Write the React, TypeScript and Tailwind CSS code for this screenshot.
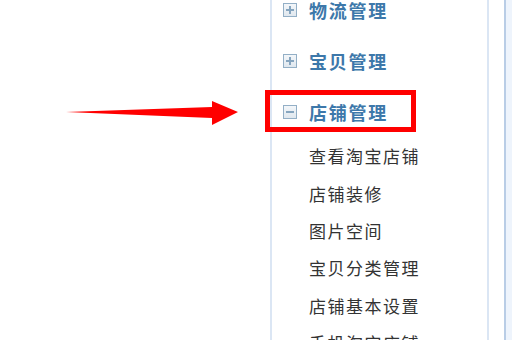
const groups = ["物流管理", "宝贝管理"];

const shopItems = [
  "查看淘宝店铺",
  "店铺装修",
  "图片空间",
  "宝贝分类管理",
  "店铺基本设置",
  "手机淘宝店铺",
];

function ToggleIcon({ open }: { open?: boolean }) {
  return (
    <svg width="14" height="14" viewBox="0 0 14 14" className="flex-none">
      <defs>
        <linearGradient id={open ? "gm" : "gp"} x1="0" y1="0" x2="0" y2="1">
          <stop offset="0" stopColor="#f4f7fa" />
          <stop offset="1" stopColor="#dfe7ee" />
        </linearGradient>
      </defs>
      <rect x="0.5" y="0.5" width="13" height="13" fill={`url(#${open ? "gm" : "gp"})`} stroke="#93afc6" />
      <rect x="3" y="6" width="8" height="2" fill="#86a5bf" />
      {!open && <rect x="6" y="3" width="2" height="8" fill="#86a5bf" />}
    </svg>
  );
}

function GroupRow({ label, open }: { label: string; open?: boolean }) {
  return (
    <div className="relative flex h-[51px] items-center gap-[12px] pl-[11px]">
      <ToggleIcon open={open} />
      <span className="text-[18px] font-bold tracking-[1.75px] text-[#3d78aa] leading-none">{label}</span>
      {open && (
        <div className="absolute left-[-7px] top-[4px] h-[42px] w-[151px] border-[5px] border-[#ff0000]" />
      )}
    </div>
  );
}

export default function App() {
  return (
    <div
      className="flex h-[340px] w-[512px] overflow-hidden bg-white"
      style={{ fontFamily: '"Noto Sans CJK SC", "Noto Sans", sans-serif' }}
    >
      <div className="w-[270px] flex-none pt-[100px] pl-[64px]">
        <svg width="176" height="26" viewBox="0 0 176 26">
          <polygon points="2,12 148,7 148,1 174,12 148,25 148,18" fill="#ff0000" />
        </svg>
      </div>

      <div className="w-[219px] flex-none border-x-2 border-[#dbe6f4]">
        <div className="-mt-[16px]">
          {groups.map((g) => (
            <GroupRow key={g} label={g} />
          ))}
          <GroupRow label="店铺管理" open />
          {shopItems.map((item) => (
            <div key={item} className="flex h-[37.4px] items-center pl-[37px]">
              <span className="text-[17px] tracking-[1.5px] text-[#333333] leading-none">{item}</span>
            </div>
          ))}
        </div>
      </div>

      <div className="w-[15px] flex-none bg-white" />
      <div className="flex-1 border-l-2 border-[#b9cde6] bg-[#eef4fc]" />
    </div>
  );
}
